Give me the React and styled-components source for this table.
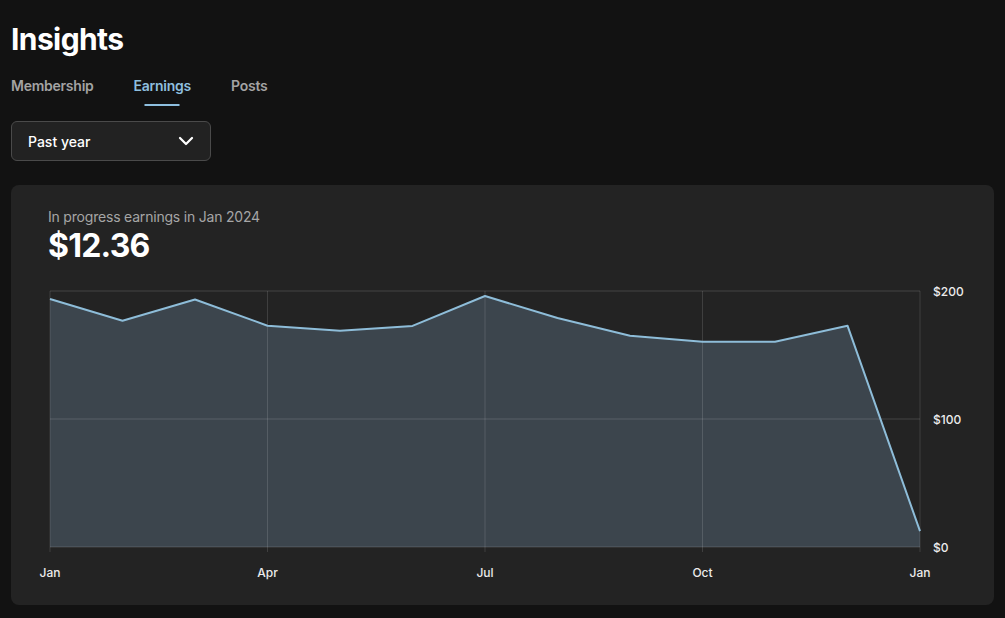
import React, { useState } from "react";
import styled, { createGlobalStyle } from "styled-components";

const GlobalStyle = createGlobalStyle`
  html, body {
    margin: 0;
    padding: 0;
    background: #121212;
  }
  body {
    font-family: Inter, "Noto Sans", sans-serif;
    color: #fff;
    -webkit-font-smoothing: antialiased;
  }
`;

// monthly earnings, last point is the month in progress
const earnings = [
  193.8, 176.8, 193.4, 172.9, 169, 172.7, 196.1, 178.9, 165, 160.4, 160.4, 172.9, 12.36,
];

const xLabels = [
  { label: "Jan", index: 0 },
  { label: "Apr", index: 3 },
  { label: "Jul", index: 6 },
  { label: "Oct", index: 9 },
  { label: "Jan", index: 12 },
];

const yLabels = [200, 100, 0];

const PLOT = { left: 2, right: 872, top: 6, bottom: 262, max: 200 };

const tabs = ["Membership", "Earnings", "Posts"];

const App = () => {
  const [activeTab, setActiveTab] = useState("Earnings");

  const xFor = (i) => PLOT.left + ((PLOT.right - PLOT.left) / (earnings.length - 1)) * i;
  const yFor = (v) => PLOT.bottom - (v / PLOT.max) * (PLOT.bottom - PLOT.top);

  const linePoints = earnings.map((v, i) => `${xFor(i)},${yFor(v)}`).join(" ");
  const areaPoints = `${PLOT.left},${PLOT.bottom} ${linePoints} ${PLOT.right},${PLOT.bottom}`;

  return (
    <Page>
      <GlobalStyle />
      <Title>Insights</Title>

      <Tabs>
        {tabs.map((t) => (
          <Tab key={t} $active={t === activeTab} onClick={() => setActiveTab(t)}>
            {t}
          </Tab>
        ))}
      </Tabs>

      <Select>
        <span>Past year</span>
        <svg width="18" height="18" viewBox="0 0 24 24" fill="none">
          <path d="M4 8l8 8 8-8" stroke="#fff" strokeWidth="3" strokeLinecap="round" strokeLinejoin="round" />
        </svg>
      </Select>

      <Card>
        <Caption>In progress earnings in Jan 2024</Caption>
        <Amount>$12.36</Amount>

        <Chart width="946" height="300" viewBox="0 0 946 300">
          {/* fill under the line */}
          <polygon points={areaPoints} fill="#3c454d" />

          {/* grid */}
          {[0, 100, 200].map((v) => (
            <line
              key={v}
              x1={PLOT.left}
              x2={PLOT.right}
              y1={yFor(v)}
              y2={yFor(v)}
              stroke="rgba(255,255,255,0.1)"
              strokeWidth="1.5"
            />
          ))}
          {xLabels.map(({ index }) => (
            <line
              key={index}
              x1={xFor(index)}
              x2={xFor(index)}
              y1={PLOT.top}
              y2={PLOT.bottom + 5}
              stroke="rgba(255,255,255,0.13)"
              strokeWidth="1"
            />
          ))}

          <polyline
            points={linePoints}
            fill="none"
            stroke="#8ebdd9"
            strokeWidth="2"
            strokeLinejoin="round"
          />

          {yLabels.map((v) => (
            <AxisText key={v} x={PLOT.right + 13} y={yFor(v)} dominantBaseline="central">
              ${v}
            </AxisText>
          ))}
          {xLabels.map(({ label, index }) => (
            <AxisText
              key={index}
              x={xFor(index)}
              y={PLOT.bottom + 25}
              textAnchor="middle"
              dominantBaseline="central"
            >
              {label}
            </AxisText>
          ))}
        </Chart>
      </Card>
    </Page>
  );
};

export default App;

const Page = styled.div`
  padding: 19px 11px 13px;
  display: flex;
  flex-direction: column;
  align-items: flex-start;
`;

const Title = styled.h1`
  margin: 0;
  font-size: 30px;
  line-height: 40px;
  font-weight: 700;
  letter-spacing: -0.6px;
  color: #fff;
`;

const Tabs = styled.div`
  display: flex;
  gap: 40px;
  margin-top: 17px;
`;

const Tab = styled.button`
  position: relative;
  background: none;
  border: none;
  padding: 0 0 10px;
  font-family: inherit;
  font-size: 14px;
  line-height: 20px;
  font-weight: 600;
  letter-spacing: -0.25px;
  color: ${(p) => (p.$active ? "#8ebfdf" : "#a3a3a3")};
  cursor: pointer;

  &::after {
    content: "";
    display: ${(p) => (p.$active ? "block" : "none")};
    position: absolute;
    left: 50%;
    bottom: 0;
    width: 35px;
    height: 2px;
    transform: translateX(-50%);
    background: #8ebfdf;
  }
`;

const Select = styled.div`
  margin-top: 15px;
  width: 200px;
  height: 40px;
  box-sizing: border-box;
  display: flex;
  align-items: center;
  justify-content: space-between;
  padding: 0 15px 0 16px;
  background: #222;
  border: 1px solid #4a4a4a;
  border-radius: 6px;
  font-size: 14px;
  font-weight: 500;
  color: #fff;
  cursor: pointer;
`;

const Card = styled.div`
  margin-top: 24px;
  align-self: stretch;
  background: #232323;
  border-radius: 8px;
  padding: 22px 0 20px 37px;
  display: flex;
  flex-direction: column;
`;

const Caption = styled.div`
  font-size: 14px;
  line-height: 20px;
  letter-spacing: -0.2px;
  color: #a6a6a6;
`;

const Amount = styled.div`
  font-size: 32px;
  line-height: 38px;
  font-weight: 700;
  color: #fff;
  letter-spacing: -0.8px;
`;

const Chart = styled.svg`
  display: block;
  margin-top: 20px;
  overflow: visible;
`;

const AxisText = styled.text`
  font-family: Inter, "Noto Sans", sans-serif;
  font-size: 12px;
  font-weight: 500;
  fill: #ececec;
`;
